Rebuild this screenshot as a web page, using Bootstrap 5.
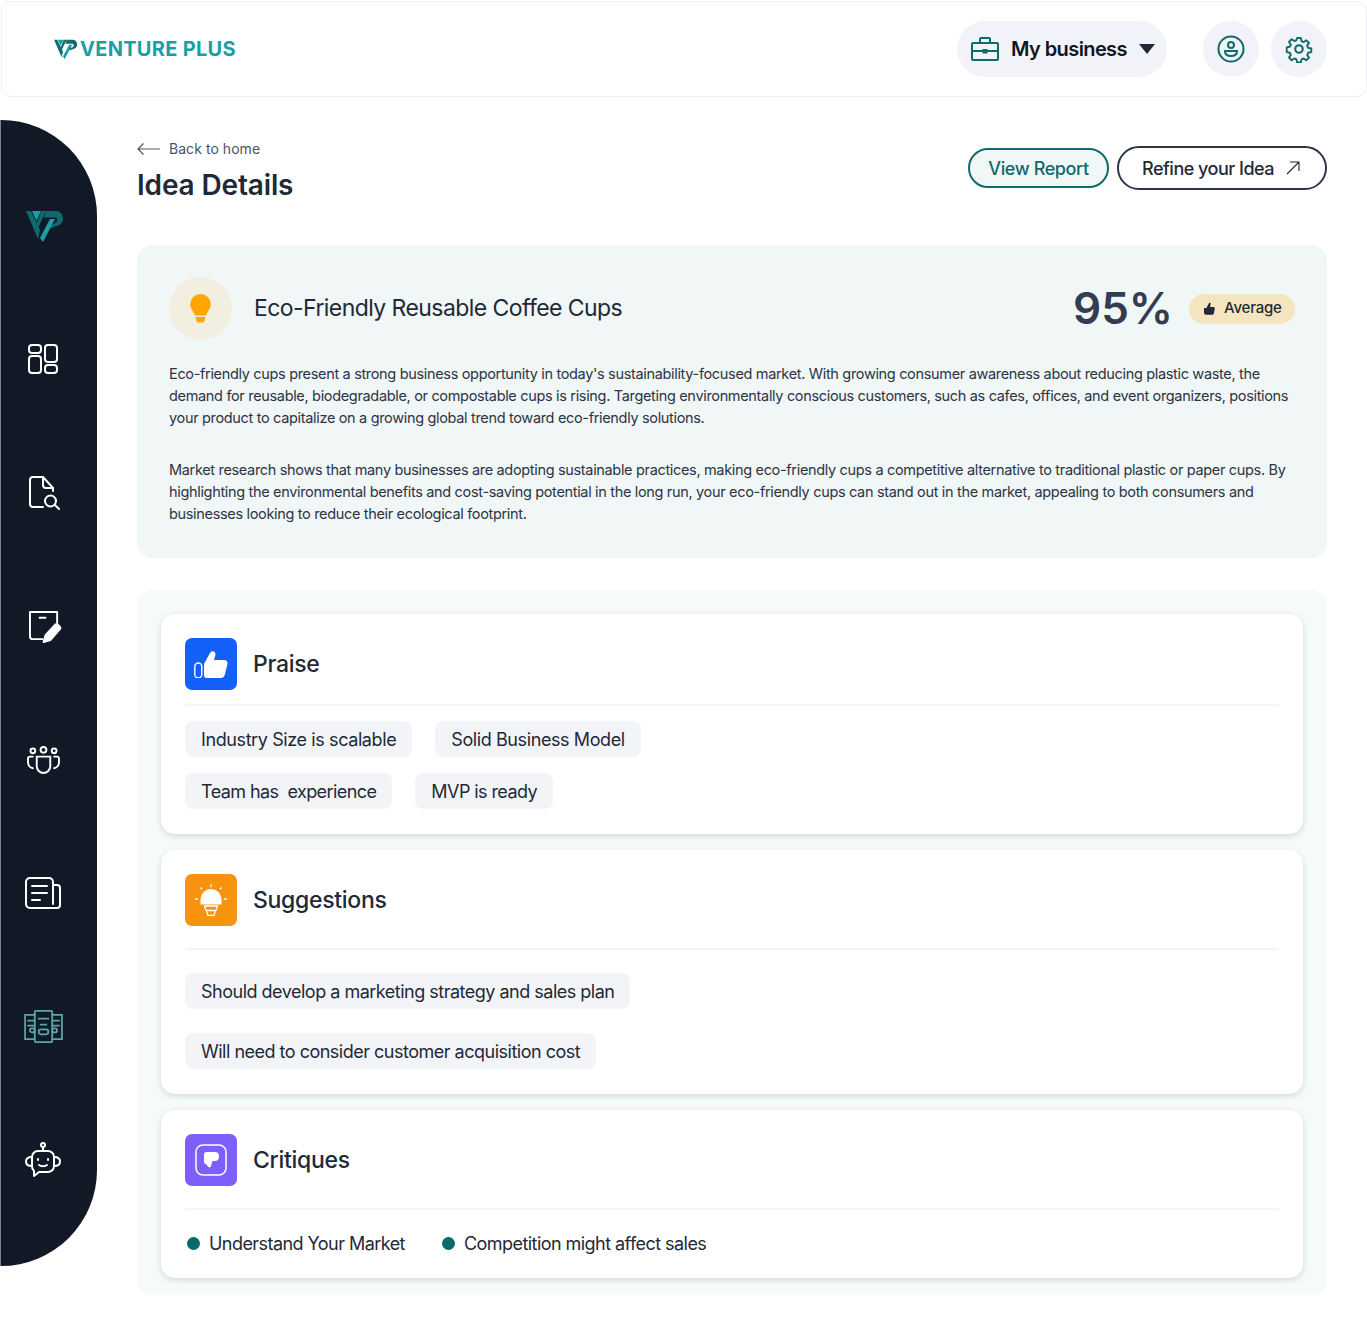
<!DOCTYPE html>
<html lang="en">
<head>
    <meta charset="UTF-8">
    <meta name="viewport" content="width=device-width, initial-scale=1.0">
    <link href="https://cdn.jsdelivr.net/npm/bootstrap@5.3.3/dist/css/bootstrap.min.css" rel="stylesheet">
    <script src="https://cdn.jsdelivr.net/npm/bootstrap@5.3.3/dist/js/bootstrap.bundle.min.js"></script>
    <title>Idea Details</title>
    <style>
        body { font-family: "Inter", "Liberation Sans", sans-serif; color: #1f2937; background: #fff; height: 1330px; overflow: hidden; }
        svg { display: block; flex-shrink: 0; }

        .top-bar { height: 96px; margin: 1px 0 0 1px; padding: 0 39px 0 52px; border: 1px solid #f0f1f6; border-radius: 10px; }
        .brand-text { font-weight: 700; font-size: 20px; color: #1a9fa6; margin-left: 2px; letter-spacing: .3px; white-space: nowrap; }
        .biz-pill { height: 56px; width: 210px; background: #f2f3f8; border-radius: 28px; padding: 0 12px 0 14px; margin-right: 24px; font-size: 20px; font-weight: 600; color: #0f1521; letter-spacing: -.6px; }
        .caret-down { width: 0; height: 0; border-left: 8px solid transparent; border-right: 8px solid transparent; border-top: 10px solid #1f2937; }
        .round-btn { width: 56px; height: 56px; background: #f2f3f8; border-radius: 50%; margin-left: 12px; }

        .side-rail { width: 97px; height: 1146px; margin-top: 23px; background: #111927; border-radius: 0 96px 96px 0; border-left: 1px solid #7d828a; padding: 45px 12px 0 0; }
        .rail-slot { height: 133.5px; padding-bottom: 12px; flex-shrink: 0; }
        .page-main { width: 1190px; margin-left: 40px; padding-top: 43px; }

        .back-link { font-size: 14px; color: #4b5468; letter-spacing: .05px; line-height: 18px; }
        .page-title { font-size: 28px; font-weight: 600; color: #1f2937; letter-spacing: -.15px; line-height: 36px; margin: 9px 0 0; }
        .btn-report, .btn-refine { display: flex; align-items: center; background: #fff; border-radius: 22px; font-size: 18px; font-weight: 500; letter-spacing: -.4px; }
        .btn-report { height: 40px; width: 141px; justify-content: center; background: #f1f7f6; border: 2px solid #0f6a6b; color: #0f6a6b; margin-top: 8px; }
        .btn-refine { height: 44px; width: 210px; border: 2px solid #2d3547; color: #1f2937; margin: 6px 0 0 8px; padding-left: 23px; gap: 12px; letter-spacing: -.5px; }

        .idea-panel { background: #f1f6f6; border-radius: 16px; padding: 32px 32px 31px; margin-top: 42px; height: 313px; }
        .bulb-circle { width: 63px; height: 63px; border-radius: 50%; background: #f3efe0; margin-right: 22px; }
        .idea-name { font-size: 23px; font-weight: 400; color: #1f2937; letter-spacing: -.57px; }
        .idea-score { font-size: 44px; font-weight: 600; color: #333c50; line-height: 1; letter-spacing: 0; margin-right: 16px; padding-bottom: 2px; }
        .score-chip { height: 30px; width: 106px; background: #f4e5bf; border-radius: 15px; font-size: 15px; font-weight: 500; color: #1f2937; padding-left: 14px; gap: 9px; letter-spacing: -.2px; }
        .idea-copy { font-size: 14.5px; line-height: 22px; letter-spacing: -.33px; color: #2b3445; margin: 0; }
        .idea-copy + .idea-copy { margin-top: 30px; }
        .idea-head { margin-bottom: 23px; }

        .feedback-wrap { background: #f6fafa; border-radius: 16px; padding: 24px; margin-top: 32px; height: 705px; }
        .fb-card { background: #fff; border-radius: 14px; box-shadow: 0 2px 6px rgba(40, 70, 80, .18); padding: 24px 24px 0; margin-bottom: 16px; }
        .fb-head { display: flex; align-items: center; gap: 16px; border-bottom: 2px solid #f3f4f6; font-size: 23px; font-weight: 500; letter-spacing: -.3px; color: #1f2937; }
        .head-praise { padding-bottom: 14px; }
        .head-other { padding-bottom: 22px; }
        .fb-icon { width: 52px; height: 52px; border-radius: 7px; display: flex; align-items: center; justify-content: center; }
        .bg-praise { background: #1560fb; }
        .bg-suggest { background: #f8930d; }
        .bg-critique { background: #7f5ffb; }
        .fb-chip { display: inline-flex; align-items: center; height: 36px; padding: 0 16px; background: #f2f4f8; border-radius: 8px; font-size: 18px; color: #1f2937; letter-spacing: -.5px; white-space: nowrap; }
        .chip-wide { letter-spacing: -.4px; }
        .chip-tight { letter-spacing: -.58px; }
        .chips-praise { padding: 15px 0 25px; }
        .chips-suggest { padding: 23px 0 25px; }
        .chips-critique { padding: 20px 0 21px; }
        .chip-line { gap: 23px; }
        .dot-item { display: flex; align-items: center; gap: 9px; font-size: 18px; letter-spacing: -.55px; margin-right: 35px; margin-left: 2px; }
        .dot-mark { width: 13px; height: 13px; border-radius: 50%; background: #036b6c; }
    </style>
</head>
<body>

    <div class="top-bar d-flex align-items-center justify-content-between">
        <div class="d-flex align-items-center">
            <svg width="24" height="20" viewBox="0 0 38 32"><path d="M0 1h5l9 19-2 9z" fill="#0e6a6c"/><path d="M6 1h9l-4.500 10z" fill="#1a9fa6"/><path d="M15.500 1H20l-8 17-1.200-5z" fill="#0e6a6c"/><path d="M20 1h10a7.500 7.500 0 0 1 2 14.500l-8 3 1.500-4 4-1.500c3-1 2-5.500-.5-5.500H18z" fill="#0e6a6c"/><path d="M24 9h5L17 32l-3-4z" fill="#1a9fa6"/></svg>
            <span class="brand-text">VENTURE PLUS</span>
        </div>
        <div class="d-flex align-items-center">
            <div class="biz-pill d-flex align-items-center justify-content-between">
                <svg width="28" height="24" viewBox="0 0 28 24" fill="none" stroke="#0f6a6b" stroke-width="2"><rect x="1" y="6" width="26" height="17" rx="1"/><path d="M1 14h26M9 6V2a1 1 0 0 1 1-1h8a1 1 0 0 1 1 1v4"/><rect x="12.500" y="13" width="3" height="2.500" fill="#0f6a6b"/></svg>
                <span>My business</span>
                <span class="caret-down"></span>
            </div>
            <div class="round-btn d-flex align-items-center justify-content-center">
                <svg width="28" height="28" viewBox="0 0 28 28" fill="none" stroke="#0f6a6b" stroke-width="2"><circle cx="14" cy="14" r="12.500"/><circle cx="14" cy="10" r="3"/><path d="M8 16h12c0 3.500-2.500 5-6 5s-6-1.500-6-5z"/></svg>
            </div>
            <div class="round-btn d-flex align-items-center justify-content-center">
                <svg width="28" height="28" viewBox="0 0 24 24" fill="none" stroke="#0f6a6b" stroke-width="1.800" stroke-linejoin="round"><circle cx="12" cy="12" r="3.200"/><path d="M10.200 1.500h3.600l.6 3 2 .9 2.600-1.700 2.500 2.600-1.700 2.500.9 2.100 3 .6v3.500l-3 .6-.9 2 1.700 2.600-2.600 2.500-2.500-1.700-2 .9-.6 3h-3.600l-.6-3-2-.9-2.600 1.700-2.500-2.500 1.700-2.600-.9-2-3-.6V10.500l3-.6.9-2.100-1.700-2.500 2.500-2.600 2.600 1.700 2-.9z" transform="translate(1.200 1.200) scale(.9)"/></svg>
            </div>
        </div>
    </div>

    <div class="d-flex">
        <aside class="side-rail d-flex flex-column align-items-center">
            <div class="rail-slot d-flex align-items-center justify-content-center">
                <svg class="ms-1" width="38" height="32" viewBox="0 0 38 32"><path d="M0 1h5l9 19-2 9z" fill="#0e6a6c"/><path d="M6 1h9l-4.500 10z" fill="#1a9fa6"/><path d="M15.500 1H20l-8 17-1.200-5z" fill="#0e6a6c"/><path d="M20 1h10a7.500 7.500 0 0 1 2 14.500l-8 3 1.500-4 4-1.500c3-1 2-5.500-.5-5.500H18z" fill="#0e6a6c"/><path d="M24 9h5L17 32l-3-4z" fill="#1a9fa6"/></svg>
            </div>
            <div class="rail-slot d-flex align-items-center justify-content-center">
                <svg width="30" height="30" viewBox="0 0 30 30" fill="none" stroke="#fff" stroke-width="2"><rect x="1" y="1" width="12" height="8" rx="3"/><rect x="1" y="12" width="12" height="17" rx="3"/><rect x="17" y="1" width="12" height="17" rx="3"/><rect x="17" y="21" width="12" height="8" rx="3"/></svg>
            </div>
            <div class="rail-slot d-flex align-items-center justify-content-center">
                <svg class="ms-1" width="32" height="34" viewBox="0 0 32 34" fill="none" stroke="#fff" stroke-width="2" stroke-linecap="round" stroke-linejoin="round"><path d="M14 31H4a3 3 0 0 1-3-3V4a3 3 0 0 1 3-3h10l10 11v3"/><path d="M14 1v8a3 3 0 0 0 3 3h7"/><circle cx="21.500" cy="25" r="5.500"/><path d="m26 29 4 4"/></svg>
            </div>
            <div class="rail-slot d-flex align-items-center justify-content-center">
                <svg class="ms-1" width="33" height="33" viewBox="0 0 34 34" fill="none" stroke="#fff" stroke-width="2" stroke-linecap="round" stroke-linejoin="round"><path d="M14 30H4a3 3 0 0 1-3-3V2h28v12"/><path d="M11 8h6"/><path d="M15 33l2-7 10-11c1.500-1.500 6.500 2.500 5 4.500L22 31z" fill="#fff"/></svg>
            </div>
            <div class="rail-slot d-flex align-items-center justify-content-center">
                <svg width="33" height="28" viewBox="0 0 34 29" fill="none" stroke="#fff" stroke-width="2" stroke-linecap="round"><circle cx="17" cy="4" r="3"/><circle cx="6" cy="5" r="2.500"/><circle cx="28" cy="5" r="2.500"/><path d="M10 11h14v10a7 7 0 0 1-14 0z"/><path d="M6 11H3a2 2 0 0 0-2 2v4a6 6 0 0 0 5 6M28 11h3a2 2 0 0 1 2 2v4a6 6 0 0 1-5 6"/></svg>
            </div>
            <div class="rail-slot d-flex align-items-center justify-content-center">
                <svg width="36" height="32" viewBox="0 0 36 32" fill="none" stroke="#fff" stroke-width="2" stroke-linecap="round"><path d="M28 27V5a4 4 0 0 0-4-4H5a4 4 0 0 0-4 4v22a4 4 0 0 0 4 4h27a3 3 0 0 0 3-3V11a3 3 0 0 0-3-3h-4"/><path d="M7 9h15M7 16h15M7 23h8"/></svg>
            </div>
            <div class="rail-slot d-flex align-items-center justify-content-center">
                <svg width="39" height="33" viewBox="0 0 40 34" fill="none" stroke="#5aa7a8" stroke-width="1.800" stroke-linecap="round"><rect x="11" y="1" width="18" height="32" rx="1"/><path d="M11 5H1v25h10M29 5h10v25H29"/><path d="M15 9h10M17 15h6"/><rect x="15" y="20" width="10" height="5" rx="2.500"/><path d="M4 11h7M4 16h7M29 11h7M29 16h7"/><rect x="6" y="19" width="5" height="4" rx="2"/><rect x="29" y="19" width="5" height="4" rx="2"/></svg>
            </div>
            <div class="rail-slot d-flex align-items-center justify-content-center">
                <svg width="36" height="36" viewBox="0 0 36 36" fill="none" stroke="#fff" stroke-width="2" stroke-linecap="round" stroke-linejoin="round"><circle cx="18" cy="3" r="2"/><path d="M18 5v4"/><path d="M13 9h10a6 6 0 0 1 6 6v9a6 6 0 0 1-6 6H14l-5 4v-5a6 6 0 0 1-2-5v-9a6 6 0 0 1 6-6z"/><path d="M7 15c-3 0-6 1-6 4.500S4 24 7 24M29 15c3 0 6 1 6 4.500S32 24 29 24"/><path d="M13 17v1M23 17v1M14 23c2 1.500 6 1.500 8 0"/></svg>
            </div>
        </aside>

        <main class="page-main">
            <div class="d-flex justify-content-between align-items-start">
                <div>
                    <div class="back-link d-flex align-items-center gap-2">
                        <svg width="24" height="12" viewBox="0 0 24 12" fill="none" stroke="#4b5468" stroke-width="1.200"><path d="M23 6H1M6.500 .5 1 6l5.500 5.500"/></svg>
                        <span>Back to home</span>
                    </div>
                    <h1 class="page-title">Idea Details</h1>
                </div>
                <div class="d-flex align-items-start">
                    <div class="btn-report">View Report</div>
                    <div class="btn-refine">
                        <span>Refine your Idea</span>
                        <svg width="14" height="14" viewBox="0 0 14 14" fill="none" stroke="#1f2937" stroke-width="1.100"><path d="M1 13 13 1M4 1h9v9"/></svg>
                    </div>
                </div>
            </div>

            <section class="idea-panel">
                <div class="idea-head d-flex align-items-center">
                    <div class="bulb-circle d-flex align-items-center justify-content-center">
                        <svg width="21" height="29" viewBox="0 0 21 29" fill="#ffa600"><path d="M10.500 0a10.300 10.300 0 0 1 10.300 10.300c0 5-3.300 6.500-4.800 11.200H5C3.500 16.800.2 15.300.2 10.300A10.300 10.300 0 0 1 10.500 0z"/><path d="M5.500 23h10l-1 4a2 2 0 0 1-2 1.500h-4a2 2 0 0 1-2-1.500z"/></svg>
                    </div>
                    <div class="idea-name flex-grow-1">Eco-Friendly Reusable Coffee Cups</div>
                    <div class="idea-score">95%</div>
                    <div class="score-chip d-flex align-items-center">
                        <svg width="12" height="13" viewBox="0 0 12 13" fill="#1f2937"><path d="M1 6h2.500L6 1c1.500-.5 2 .5 1.500 1.500L7 5h3.500c1 0 1.500.8 1.300 1.700l-1 4.800c-.2.800-.8 1.300-1.600 1.300H3a2 2 0 0 1-2-2z"/></svg>
                        <span>Average</span>
                    </div>
                </div>
                <p class="idea-copy">Eco-friendly cups present a strong business opportunity in today's sustainability-focused market. With growing consumer awareness about reducing plastic waste, the demand for reusable, biodegradable, or compostable cups is rising. Targeting environmentally conscious customers, such as cafes, offices, and event organizers, positions your product to capitalize on a growing global trend toward eco-friendly solutions.</p>
                <p class="idea-copy">Market research shows that many businesses are adopting sustainable practices, making eco-friendly cups a competitive alternative to traditional plastic or paper cups. By highlighting the environmental benefits and cost-saving potential in the long run, your eco-friendly cups can stand out in the market, appealing to both consumers and businesses looking to reduce their ecological footprint.</p>
            </section>

            <section class="feedback-wrap">
                <div class="fb-card">
                    <div class="fb-head head-praise">
                        <div class="fb-icon bg-praise">
                            <svg width="34" height="28" viewBox="0 0 34 28"><rect x=".8" y="13" width="7" height="15" rx="3.500" fill="none" stroke="#fff" stroke-width="1.400"/><path d="M10 14 16 3c1-2.500 5.500-2.500 5.500 1.500L20 10h10c2.500 0 4 2 3.500 4l-2.500 10c-.5 2.500-2 4-4.500 4H13c-2 0-3-1-3-3z" fill="#fff"/></svg>
                        </div>
                        <span>Praise</span>
                    </div>
                    <div class="chips-praise">
                        <div class="chip-line d-flex mb-3">
                            <span class="fb-chip chip-wide">Industry Size is scalable</span>
                            <span class="fb-chip chip-wide">Solid Business Model</span>
                        </div>
                        <div class="chip-line d-flex">
                            <span class="fb-chip chip-tight">Team has&nbsp; experience</span>
                            <span class="fb-chip chip-tight">MVP is ready</span>
                        </div>
                    </div>
                </div>

                <div class="fb-card">
                    <div class="fb-head head-other">
                        <div class="fb-icon bg-suggest">
                            <svg width="32" height="32" viewBox="0 0 32 32"><path d="M5.500 20.500v-5a10.500 10.500 0 0 1 21 0v5z" fill="#fff"/><path d="M9.500 22h13l-1.500 4.500H11zM11.500 26.500h9l-1.500 5h-6z" fill="none" stroke="#fff" stroke-width="1.300" stroke-linejoin="round"/><path d="M16 .5v2.500M5.500 3.500l1.500 1.800M26.500 3.500 25 5.300M0 15h3M29 15h3" stroke="#fff" stroke-width="1.400" fill="none"/></svg>
                        </div>
                        <span>Suggestions</span>
                    </div>
                    <div class="chips-suggest">
                        <div class="mb-4"><span class="fb-chip">Should develop a marketing strategy and sales plan</span></div>
                        <div><span class="fb-chip">Will need to consider customer acquisition cost</span></div>
                    </div>
                </div>

                <div class="fb-card">
                    <div class="fb-head head-other">
                        <div class="fb-icon bg-critique">
                            <svg width="32" height="32" viewBox="0 0 32 32"><rect x="1" y="1" width="30" height="30" rx="7" fill="none" stroke="#fff" stroke-width="1.500"/><path d="M11 8h9c2.500 0 4 1.500 4 4v1c0 2.500-1.500 4-4 4h-2.500l-1.500 5c-.5 1.500-2 2-3 .5L11 20c-1.500 0-2.500-1.500-2-3.500V10c0-1 1-2 2-2z" fill="#fff"/></svg>
                        </div>
                        <span>Critiques</span>
                    </div>
                    <div class="chips-critique d-flex">
                        <div class="dot-item"><span class="dot-mark"></span>Understand Your Market</div>
                        <div class="dot-item"><span class="dot-mark"></span>Competition might affect sales</div>
                    </div>
                </div>
            </section>
        </main>
    </div>

</body>
</html>
